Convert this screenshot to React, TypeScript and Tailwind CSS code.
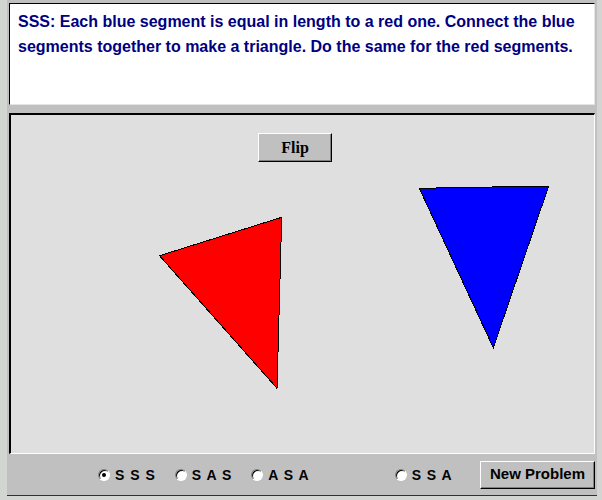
import React from "react";

const Radio = ({ label, checked }: { label: string; checked?: boolean }) => {
  return (
    <div className="flex items-center">
      <span className="w-[12px] h-[12px] rounded-full bg-white border border-t-[#808080] border-l-[#808080] border-r-white border-b-white shadow-[inset_1px_1px_0_#000] flex items-center justify-center">
        {checked && <span className="w-[4px] h-[4px] rounded-full bg-black" />}
      </span>
      <span className="ml-[5px] text-[14px] font-bold tracking-[1px] text-black leading-none">
        {label}
      </span>
    </div>
  );
};

const App = () => {
  return (
    <div
      className="w-[602px] h-[500px] bg-[#d3d5d3] pl-[7px] pr-[5px] pb-[4px]"
      style={{ fontFamily: '"Liberation Sans", Arial, sans-serif' }}
    >
      <div className="w-[590px] h-[496px] bg-[#c0c0c0] border-b border-[#303030] flex flex-col">
        <div className="mx-[2px] mt-[3px] h-[102px] bg-white border border-t-black border-l-black border-r-[#e4e4e4] border-b-[#e4e4e4] pl-[8px] pt-[5px]">
          <p className="text-[16px] font-bold leading-[25px] text-[#000080]">
            SSS: Each blue segment is equal in length to a red one. Connect the blue
            <br />
            segments together to make a triangle. Do the same for the red segments.
          </p>
        </div>

        <div className="relative mx-[2px] mt-[8px] h-[341px] bg-[#dfdfdf] border-t-2 border-l-2 border-r border-b border-t-black border-l-black border-r-white border-b-white">
          <button
            className="absolute left-[247px] top-[18px] w-[74px] h-[29px] bg-[#c0c0c0] border border-t-white border-l-white border-r-black border-b-black shadow-[inset_-1px_-1px_0_#808080] text-[16px] font-bold text-black"
            style={{ fontFamily: '"Liberation Serif", "Times New Roman", serif' }}
          >
            Flip
          </button>
          <svg
            className="absolute left-[-2px] top-[-2px]"
            width="587"
            height="341"
            viewBox="9 113 587 341"
            shapeRendering="crispEdges"
          >
            <polygon
              points="159.5,255.7 281.7,217.3 277,388.3"
              fill="#ff0000"
              stroke="#000"
              strokeWidth="1"
            />
            <polygon
              points="419.3,188.3 548.7,186 493.3,347.7"
              fill="#0000ff"
              stroke="#000"
              strokeWidth="1"
            />
          </svg>
        </div>

        <div className="h-[41px] flex items-center">
          <div className="ml-[91px]">
            <Radio label="S S S" checked />
          </div>
          <div className="ml-[19px]">
            <Radio label="S A S" />
          </div>
          <div className="ml-[19px]">
            <Radio label="A S A" />
          </div>
          <div className="ml-[85px]">
            <Radio label="S S A" />
          </div>
          <button className="ml-auto mr-[2px] w-[115px] h-[28px] bg-[#c0c0c0] border border-t-white border-l-white border-r-black border-b-black shadow-[inset_-1px_-1px_0_#808080] text-[15px] font-bold text-black">
            New Problem
          </button>
        </div>
      </div>
    </div>
  );
};

export default App;
